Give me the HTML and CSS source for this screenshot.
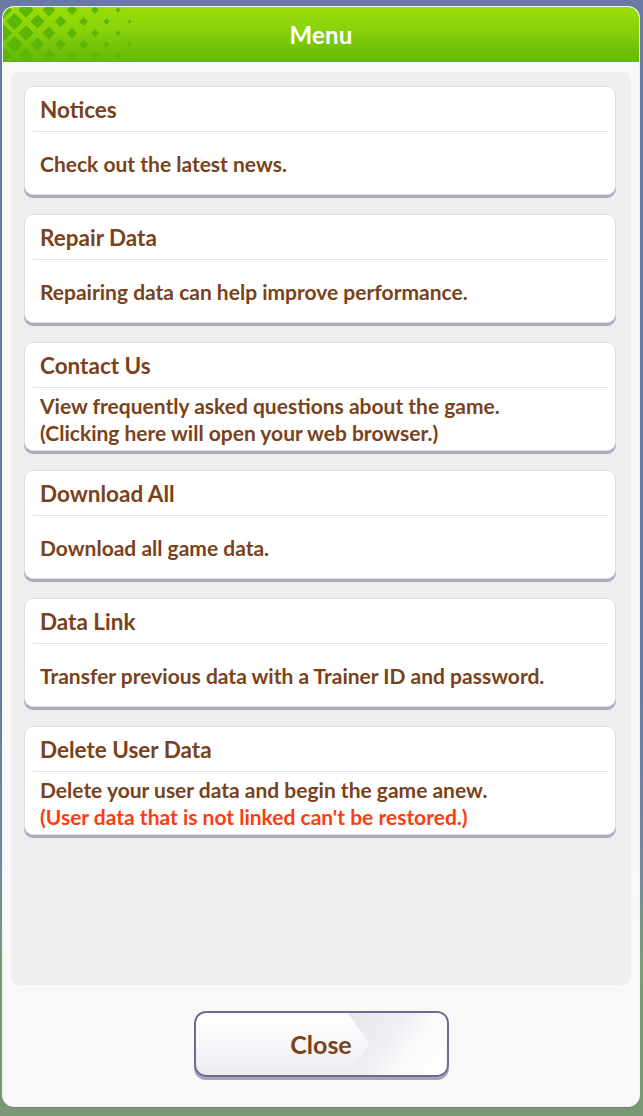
FILE: index.html
```html
<!DOCTYPE html>
<html lang="en">
<head>
<meta charset="utf-8">
<title>Menu</title>
<link rel="stylesheet" href="styles.css">
</head>
<body>
<div class="panel">
  <header class="panel-header">
    <svg class="header-pattern" width="140" height="55" viewBox="0 0 140 55" aria-hidden="true">
      <g fill="#5cb605">
        <path transform="translate(0 3) scale(9)" d="M0-1L1 0L0 1L-1 0Z"/>
        <path transform="translate(23 3) scale(7.7)" d="M0-1L1 0L0 1L-1 0Z"/>
        <path transform="translate(46 3) scale(6.5)" d="M0-1L1 0L0 1L-1 0Z"/>
        <path transform="translate(69 3) scale(5.2)" d="M0-1L1 0L0 1L-1 0Z"/>
        <path transform="translate(92 3) scale(3.9)" d="M0-1L1 0L0 1L-1 0Z"/>
        <path transform="translate(115 3) scale(2.7)" d="M0-1L1 0L0 1L-1 0Z"/>
        <path transform="translate(11.5 14.5) scale(8.4)" d="M0-1L1 0L0 1L-1 0Z"/>
        <path transform="translate(34.5 14.5) scale(7.1)" d="M0-1L1 0L0 1L-1 0Z"/>
        <path transform="translate(57.5 14.5) scale(5.8)" d="M0-1L1 0L0 1L-1 0Z"/>
        <path transform="translate(80.5 14.5) scale(4.6)" d="M0-1L1 0L0 1L-1 0Z"/>
        <path transform="translate(103.5 14.5) scale(3.3)" d="M0-1L1 0L0 1L-1 0Z"/>
        <path transform="translate(126.5 14.5) scale(2)" d="M0-1L1 0L0 1L-1 0Z"/>
        <path transform="translate(0 26) scale(9)" d="M0-1L1 0L0 1L-1 0Z"/>
        <path transform="translate(23 26) scale(7.7)" d="M0-1L1 0L0 1L-1 0Z"/>
        <path transform="translate(46 26) scale(6.5)" d="M0-1L1 0L0 1L-1 0Z"/>
        <path transform="translate(69 26) scale(5.2)" d="M0-1L1 0L0 1L-1 0Z"/>
        <path transform="translate(92 26) scale(3.9)" d="M0-1L1 0L0 1L-1 0Z"/>
        <path transform="translate(115 26) scale(2.7)" d="M0-1L1 0L0 1L-1 0Z"/>
        <path transform="translate(11.5 37.5) scale(8.4)" d="M0-1L1 0L0 1L-1 0Z"/>
        <path transform="translate(34.5 37.5) scale(7.1)" d="M0-1L1 0L0 1L-1 0Z"/>
        <path transform="translate(57.5 37.5) scale(5.8)" d="M0-1L1 0L0 1L-1 0Z"/>
        <path transform="translate(80.5 37.5) scale(4.6)" d="M0-1L1 0L0 1L-1 0Z"/>
        <path transform="translate(103.5 37.5) scale(3.3)" d="M0-1L1 0L0 1L-1 0Z"/>
        <path transform="translate(126.5 37.5) scale(2)" d="M0-1L1 0L0 1L-1 0Z"/>
        <path transform="translate(0 49) scale(9)" d="M0-1L1 0L0 1L-1 0Z"/>
        <path transform="translate(23 49) scale(7.7)" d="M0-1L1 0L0 1L-1 0Z"/>
        <path transform="translate(46 49) scale(6.5)" d="M0-1L1 0L0 1L-1 0Z"/>
        <path transform="translate(69 49) scale(5.2)" d="M0-1L1 0L0 1L-1 0Z"/>
        <path transform="translate(92 49) scale(3.9)" d="M0-1L1 0L0 1L-1 0Z"/>
        <path transform="translate(115 49) scale(2.7)" d="M0-1L1 0L0 1L-1 0Z"/>
        <path transform="translate(11.5 60.5) scale(8.4)" d="M0-1L1 0L0 1L-1 0Z"/>
        <path transform="translate(34.5 60.5) scale(7.1)" d="M0-1L1 0L0 1L-1 0Z"/>
        <path transform="translate(57.5 60.5) scale(5.8)" d="M0-1L1 0L0 1L-1 0Z"/>
        <path transform="translate(80.5 60.5) scale(4.6)" d="M0-1L1 0L0 1L-1 0Z"/>
        <path transform="translate(103.5 60.5) scale(3.3)" d="M0-1L1 0L0 1L-1 0Z"/>
        <path transform="translate(126.5 60.5) scale(2)" d="M0-1L1 0L0 1L-1 0Z"/>
      </g>
    </svg>
    <h1 class="panel-title">Menu</h1>
  </header>

  <div class="panel-body">
    <div class="menu-list">
      <div class="menu-card">
        <div class="card-title">Notices</div>
        <div class="card-rule"></div>
        <div class="card-desc"><p>Check out the latest news.</p></div>
      </div>
      <div class="menu-card">
        <div class="card-title">Repair Data</div>
        <div class="card-rule"></div>
        <div class="card-desc"><p>Repairing data can help improve performance.</p></div>
      </div>
      <div class="menu-card">
        <div class="card-title">Contact Us</div>
        <div class="card-rule"></div>
        <div class="card-desc"><p>View frequently asked questions about the game.<br>(Clicking here will open your web browser.)</p></div>
      </div>
      <div class="menu-card">
        <div class="card-title">Download All</div>
        <div class="card-rule"></div>
        <div class="card-desc"><p>Download all game data.</p></div>
      </div>
      <div class="menu-card">
        <div class="card-title">Data Link</div>
        <div class="card-rule"></div>
        <div class="card-desc"><p>Transfer previous data with a Trainer ID and password.</p></div>
      </div>
      <div class="menu-card">
        <div class="card-title">Delete User Data</div>
        <div class="card-rule"></div>
        <div class="card-desc"><p>Delete your user data and begin the game anew.<br><span class="warn">(User data that is not linked can't be restored.)</span></p></div>
      </div>
    </div>
  </div>

  <footer class="panel-footer">
    <button class="close-btn" type="button"><span>Close</span></button>
  </footer>
</div>
</body>
</html>
```

FILE: styles.css
```css
* { box-sizing: border-box; }

html, body {
  margin: 0;
  height: 1116px;
  overflow: hidden;
}

body {
  padding: 7px 4px 10px 3px;
  font-family: Lato, "Liberation Sans", sans-serif;
  background:
    linear-gradient(to bottom, #6b79a7 0%, #6978a6 60%, #77889a 78%, #7b9a7a 86%, #7a9878 100%);
}

.panel {
  width: 636px;
  height: 1099px;
  display: flex;
  flex-direction: column;
  background: #f9f9f9;
  border-radius: 11px;
  box-shadow: 0 0 0 1px rgba(255,255,255,0.9), 0 1px 2px rgba(0,0,0,0.25);
  overflow: hidden;
}

.panel-header {
  position: relative;
  height: 55px;
  flex: none;
  display: flex;
  align-items: center;
  justify-content: center;
  background: linear-gradient(to bottom, #9add07 0%, #8ad30a 40%, #6cbe08 85%, #64b806 100%);
  border-radius: 11px 11px 0 0;
  overflow: hidden;
}

.header-pattern {
  position: absolute;
  left: 0;
  top: 0;
}

.panel-title {
  position: relative;
  margin: 0;
  color: #fff;
  font-size: 24px;
  font-weight: 700;
  letter-spacing: 0.2px;
}

.panel-body {
  flex: none;
  padding: 10px 8px 0;
}

.menu-list {
  height: 913px;
  background: #efefef;
  border-radius: 8px;
  padding: 14px 15px 0 13px;
  display: flex;
  flex-direction: column;
  gap: 19px;
}

.menu-card {
  height: 109px;
  background: #fff;
  border: 1px solid #dedede;
  border-radius: 9px;
  box-shadow: 0 3px 0 #adabc2;
  display: flex;
  flex-direction: column;
  color: #7a421a;
}

.card-title {
  height: 44px;
  display: flex;
  align-items: center;
  padding-left: 15px;
  font-size: 22.5px;
  font-weight: 700;
}

.card-rule {
  height: 1px;
  margin: 0 7px 0 8px;
  background: #e2e2e2;
}

.card-desc {
  flex: 1;
  display: flex;
  align-items: center;
  padding-left: 15px;
}

.card-desc p {
  margin: 0;
  font-size: 21px;
  font-weight: 700;
  line-height: 27px;
}

.warn { color: #ff3c10; }

.panel-footer {
  flex: 1;
  display: flex;
  justify-content: center;
  padding-top: 26px;
}

.close-btn {
  position: relative;
  width: 255px;
  height: 66px;
  border: 2px solid #6d6992;
  border-radius: 12px;
  background: linear-gradient(to bottom, #ffffff 0%, #f6f6f9 55%, #ecebf1 100%);
  box-shadow: 0 3px 0 #a6a3bd;
  overflow: hidden;
  padding: 0;
  font-family: Lato, "Liberation Sans", sans-serif;
  font-size: 25px;
  font-weight: 700;
  color: #7a421a;
  cursor: pointer;
}

.close-btn::before {
  content: "";
  position: absolute;
  top: 0;
  bottom: 0;
  left: 152px;
  right: 0;
  background: linear-gradient(125deg, #e7e6ec 0%, #efeff3 40%, #fafafc 62%, #ffffff 100%);
  clip-path: polygon(0 0, 100% 0, 100% 100%, 0 100%, 22px 50%);
}

.close-btn span {
  position: relative;
}
```
